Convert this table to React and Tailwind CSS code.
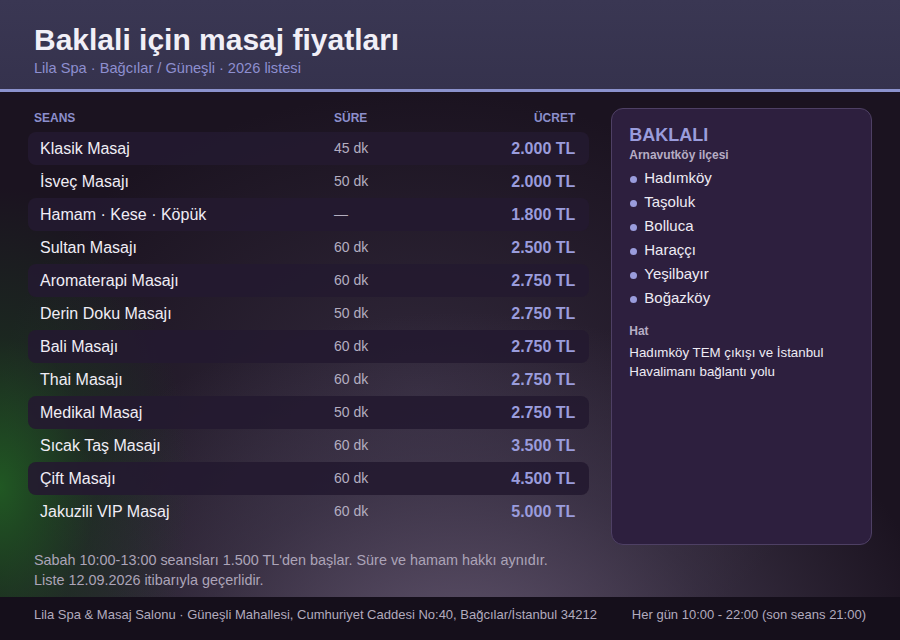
import React from 'react';

const seanslar = [
    { ad: 'Klasik Masaj', sure: '45 dk', ucret: '2.000 TL' },
    { ad: 'İsveç Masajı', sure: '50 dk', ucret: '2.000 TL' },
    { ad: 'Hamam · Kese · Köpük', sure: '—', ucret: '1.800 TL' },
    { ad: 'Sultan Masajı', sure: '60 dk', ucret: '2.500 TL' },
    { ad: 'Aromaterapi Masajı', sure: '60 dk', ucret: '2.750 TL' },
    { ad: 'Derin Doku Masajı', sure: '50 dk', ucret: '2.750 TL' },
    { ad: 'Bali Masajı', sure: '60 dk', ucret: '2.750 TL' },
    { ad: 'Thai Masajı', sure: '60 dk', ucret: '2.750 TL' },
    { ad: 'Medikal Masaj', sure: '50 dk', ucret: '2.750 TL' },
    { ad: 'Sıcak Taş Masajı', sure: '60 dk', ucret: '3.500 TL' },
    { ad: 'Çift Masajı', sure: '60 dk', ucret: '4.500 TL' },
    { ad: 'Jakuzili VIP Masaj', sure: '60 dk', ucret: '5.000 TL' },
];

const mahalleler = ['Hadımköy', 'Taşoluk', 'Bolluca', 'Haraççı', 'Yeşilbayır', 'Boğazköy'];

const App = () => {
    return (
        <div className="w-[900px] h-[640px] flex flex-col overflow-hidden font-[family-name:Liberation_Sans,Arial,sans-serif] bg-[#1b1320]">
            {/* baslik */}
            <header className="h-[89px] shrink-0 bg-[linear-gradient(180deg,#3a3753,#35324d)] px-[34px] pt-[22px]">
                <h1 className="text-[30px] leading-[36px] font-bold text-[#f1eff7]">Baklali için masaj fiyatları</h1>
                <p className="text-[14.6px] leading-[18px] text-[#8e8fd0] mt-[1px]">Lila Spa · Bağcılar / Güneşli · 2026 listesi</p>
            </header>
            <div className="h-[3px] shrink-0 bg-[#8b92cd]"></div>

            <main className="flex-1 min-h-0 flex flex-col px-[28px] pt-[16px] bg-[radial-gradient(ellipse_190px_300px_at_0px_395px,rgba(34,105,36,0.8),rgba(28,75,32,0.35)_50%,transparent),radial-gradient(ellipse_480px_360px_at_460px_580px,rgba(105,92,118,0.9),rgba(85,75,100,0.45)_55%,transparent),radial-gradient(ellipse_420px_300px_at_420px_300px,rgba(75,65,90,0.45),transparent)]">
                <div className="flex gap-[22px]">
                    <div className="w-[562px]">
                        <div className="flex items-center h-[16px] mt-[2px] mb-[6px] px-[6px] text-[12px] font-bold text-[#8c8fcc]">
                            <span className="w-[300px]">SEANS</span>
                            <span className="flex-1">SÜRE</span>
                            <span className="pr-[8px]">ÜCRET</span>
                        </div>
                        {seanslar.map((s, i) => (
                            <div
                                key={i}
                                className={
                                    i % 2 === 0
                                        ? 'flex items-center h-[33px] pl-[12px] pr-[14px] rounded-[8px] bg-[#241a30]/90'
                                        : 'flex items-center h-[33px] pl-[12px] pr-[14px] rounded-[8px]'
                                }
                            >
                                <span className="w-[294px] text-[16px] text-[#f0edf5]">{s.ad}</span>
                                <span className="flex-1 text-[14px] text-[#b4aec0]">{s.sure}</span>
                                <span className="text-[16px] font-bold text-[#9a9cdc]">{s.ucret}</span>
                            </div>
                        ))}
                    </div>

                    <aside className="w-[261px] h-[437px] rounded-[12px] border border-[#4e4064] bg-[#2d1f3e] px-[17px] pt-[15px]">
                        <h2 className="text-[18px] leading-[22px] font-bold text-[#9a9cdc]">BAKLALI</h2>
                        <p className="text-[12px] leading-[16px] font-bold text-[#b6adc4] mt-[1px]">Arnavutköy ilçesi</p>
                        <ul className="mt-[3px]">
                            {mahalleler.map((m) => (
                                <li key={m} className="flex items-center h-[24px] text-[15px] text-[#eeebf4]">
                                    <span className="w-[7px] h-[7px] rounded-full bg-[#9a9cdc] ml-[1px] mr-[7px] mt-[2px]"></span>
                                    {m}
                                </li>
                            ))}
                        </ul>
                        <p className="text-[12px] leading-[16px] font-bold text-[#b6adc4] mt-[13px]">Hat</p>
                        <p className="text-[13.3px] leading-[19px] text-[#eeebf4] mt-[4px]">
                            Hadımköy TEM çıkışı ve İstanbul Havalimanı bağlantı yolu
                        </p>
                    </aside>
                </div>

                <div className="mt-[5px] px-[6px] text-[14.4px] leading-[20px] text-[#aca4b8]">
                    <p>Sabah 10:00-13:00 seansları 1.500 TL'den başlar. Süre ve hamam hakkı aynıdır.</p>
                    <p>Liste 12.09.2026 itibarıyla geçerlidir.</p>
                </div>
            </main>

            <footer className="h-[43px] shrink-0 flex items-center justify-between px-[34px] pb-[7px] bg-[#150f1b] text-[13px] text-[#b2abbe]">
                <span>Lila Spa &amp; Masaj Salonu · Güneşli Mahallesi, Cumhuriyet Caddesi No:40, Bağcılar/İstanbul 34212</span>
                <span>Her gün 10:00 - 22:00 (son seans 21:00)</span>
            </footer>
        </div>
    );
};

export default App;
